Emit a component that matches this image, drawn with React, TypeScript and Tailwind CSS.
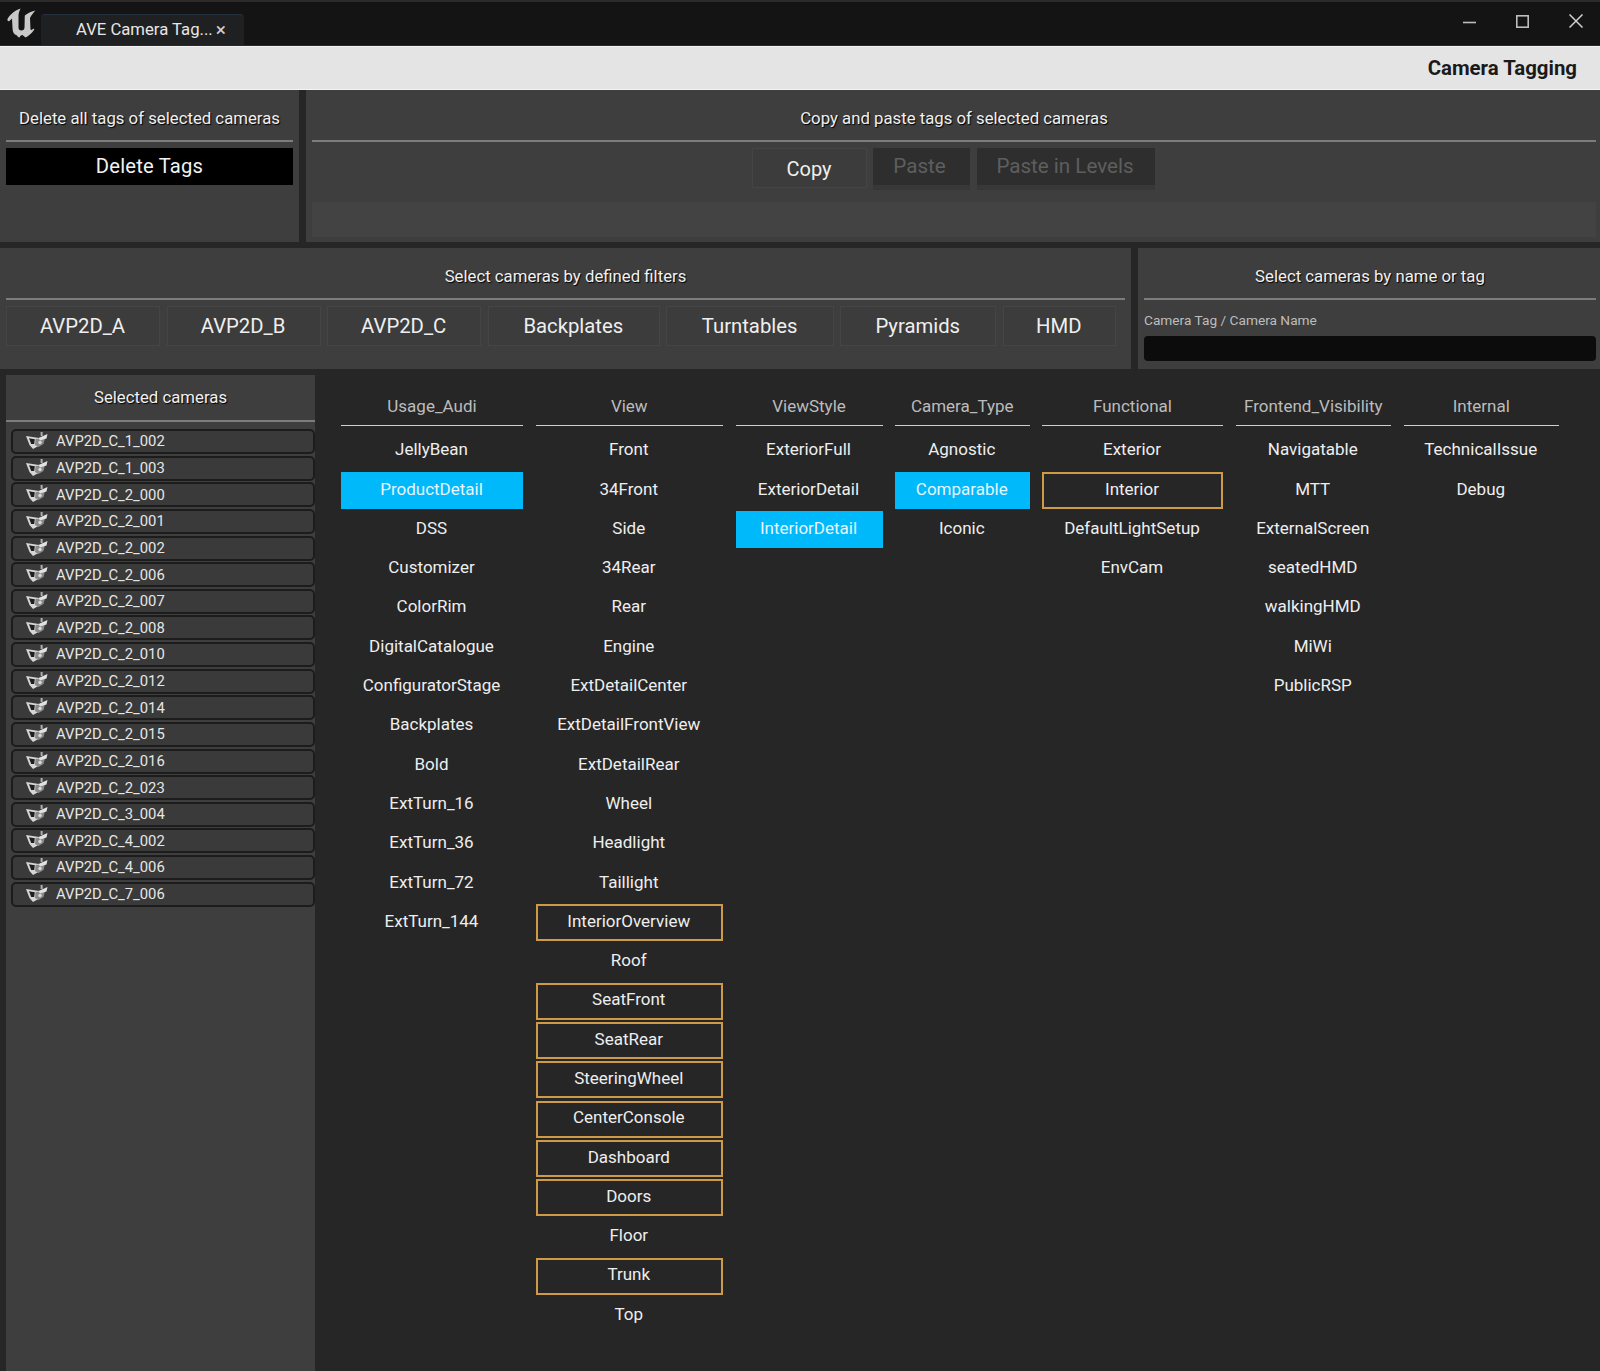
import React from "react";

const font = { fontFamily: "Roboto, 'Liberation Sans', sans-serif" };

type Tag = string | { t: string; s: "blue" | "orange" };

const o = (t: string): Tag => ({ t, s: "orange" });
const b = (t: string): Tag => ({ t, s: "blue" });

const columns: { title: string; w: string; items: Tag[] }[] = [
  {
    title: "Usage_Audi",
    w: "w-[182px]",
    items: ["JellyBean", b("ProductDetail"), "DSS", "Customizer", "ColorRim", "DigitalCatalogue", "ConfiguratorStage", "Backplates", "Bold", "ExtTurn_16", "ExtTurn_36", "ExtTurn_72", "ExtTurn_144"],
  },
  {
    title: "View",
    w: "w-[187.5px]",
    items: ["Front", "34Front", "Side", "34Rear", "Rear", "Engine", "ExtDetailCenter", "ExtDetailFrontView", "ExtDetailRear", "Wheel", "Headlight", "Taillight", o("InteriorOverview"), "Roof", o("SeatFront"), o("SeatRear"), o("SteeringWheel"), o("CenterConsole"), o("Dashboard"), o("Doors"), "Floor", o("Trunk"), "Top"],
  },
  { title: "ViewStyle", w: "w-[147px]", items: ["ExteriorFull", "ExteriorDetail", b("InteriorDetail")] },
  { title: "Camera_Type", w: "w-[134.5px]", items: ["Agnostic", b("Comparable"), "Iconic"] },
  { title: "Functional", w: "w-[181px]", items: ["Exterior", o("Interior"), "DefaultLightSetup", "EnvCam"] },
  { title: "Frontend_Visibility", w: "w-[155.5px]", items: ["Navigatable", "MTT", "ExternalScreen", "seatedHMD", "walkingHMD", "MiWi", "PublicRSP"] },
  { title: "Internal", w: "w-[155.5px]", items: ["TechnicalIssue", "Debug"] },
];

const cameras = ["1_002", "1_003", "2_000", "2_001", "2_002", "2_006", "2_007", "2_008", "2_010", "2_012", "2_014", "2_015", "2_016", "2_023", "3_004", "4_002", "4_006", "7_006"];

const filters: { t: string; w: string }[] = [
  { t: "AVP2D_A", w: "w-[154px]" },
  { t: "AVP2D_B", w: "w-[154px]" },
  { t: "AVP2D_C", w: "w-[154px]" },
  { t: "Backplates", w: "w-[172px]" },
  { t: "Turntables", w: "w-[167.5px]" },
  { t: "Pyramids", w: "w-[155.5px]" },
  { t: "HMD", w: "w-[113.5px]" },
];

function UnrealLogo() {
  return (
    <svg width="32" height="30" viewBox="0 0 32 30" className="ml-[5px] mt-[6px] shrink-0">
      <path
        fill="#c9c9c9"
        d="M15.5 0.5 C11 2 5.5 5.5 2.5 11 C2 13 3.5 14 5 12.5 L7 10.5 L7.5 20 C7.5 24 9 26.5 12 27.5 C12.5 28.5 13.5 29.5 14.5 29.5 C15 28 16 27.2 17.5 27 L20.5 29.5 C23.5 28 26.5 25.5 29 22 C29.5 21 29 20.4 28 21 L26.5 22 L25.5 21.5 L25 10 C26.5 7 28.5 4.5 30.5 2.5 C27 3.2 23 5 19.8 7.5 L19.5 19.5 C19.5 21.5 18.2 22.5 16.5 22.5 C14.5 22.5 13.5 21.3 13.5 19.5 L13.5 8 C13.5 5.5 14.3 3 15.5 0.5 Z"
      />
    </svg>
  );
}

function CameraIcon() {
  return (
    <svg width="22" height="17" viewBox="0 0 22 17" className="shrink-0 mb-[2px]">
      <path fill="#d6d6d6" d="M0 4 L13 6 L12.5 14 L7 17 L3.5 13 Z" />
      <path fill="#1e1e1e" d="M3 6.2 L8.8 7.2 L8.2 12 L5.2 12 Z" />
      <path fill="#8a8a8a" d="M9.5 7 L19 6 L17.5 12 L12.5 15 L9 13 Z" />
      <path fill="#e2e2e2" d="M12.5 6 L21.5 2 L20.5 6.5 L14 8.5 Z" />
      <rect x="14.6" y="0" width="2" height="4" fill="#b0b0b0" />
      <circle cx="14" cy="10.5" r="1.7" fill="#dadada" />
    </svg>
  );
}

function SectionHeader({ children, h = "h-[52px]", pt = "pt-[7px]" }: { children: React.ReactNode; h?: string; pt?: string }) {
  return (
    <div className={`${h} ${pt} flex items-center justify-center border-b-2 border-[#7c7c7c] text-[16.75px] text-[#f0f0f0] [text-shadow:1px_1px_1px_#000]`}>
      {children}
    </div>
  );
}

function Item({ tag }: { tag: Tag }) {
  const text = typeof tag === "string" ? tag : tag.t;
  const state = typeof tag === "string" ? null : tag.s;
  const cls =
    state === "blue"
      ? "bg-[#00b9fb] text-[#e8f4fa]"
      : state === "orange"
        ? "border-2 border-[#cf9a45] text-[#eeeeee]"
        : "text-[#eeeeee]";
  return (
    <div className={`h-[37px] shrink-0 flex items-center justify-center pb-[2px] pr-[1px] text-[17px] whitespace-nowrap ${cls}`}>
      {text}
    </div>
  );
}

export default function App() {
  return (
    <div style={font} className="w-[1600px] h-[1371px] overflow-hidden flex flex-col bg-[#262626]">
      {/* Title bar */}
      <div className="h-[46px] shrink-0 flex bg-[#141414] border-t-2 border-t-[#2b2b2b] border-b border-b-[#2a2a2a]">
        <UnrealLogo />
        <div className="ml-[4px] mt-[12px] w-[203px] h-[31px] rounded-t-[4px] bg-[#1f2022] border-t border-[#24303e] flex items-center pl-[35px] text-[16.7px] text-[#e6e6e6] shrink-0">
          <span className="whitespace-nowrap">AVE Camera Tag...</span>
          <span className="ml-[3px] pb-[2px] text-[19px] text-[#d0d0d0] leading-none">×</span>
        </div>
        <div className="ml-auto flex items-center gap-[40px] pr-[17px] pb-[5px]">
          <svg width="13" height="13" viewBox="0 0 13 13" stroke="#bdbdbd" strokeWidth="1.6" fill="none"><path d="M0 7.5H13" /></svg>
          <svg width="13" height="13" viewBox="0 0 13 13" stroke="#bdbdbd" strokeWidth="1.6" fill="none"><rect x="0.8" y="0.8" width="11.4" height="11.4" /></svg>
          <svg width="14" height="14" viewBox="0 0 14 14" stroke="#d0d0d0" strokeWidth="1.5" fill="none"><path d="M0.5 0.5L13.5 13.5M13.5 0.5L0.5 13.5" /></svg>
        </div>
      </div>

      {/* Title strip */}
      <div className="h-[44px] shrink-0 flex items-center justify-end bg-[#e4e4e4] border-y border-[#f4f4f4] pr-[23px] text-[20.4px] font-bold text-[#1a1a1a]">
        Camera Tagging
      </div>

      {/* Row 1 */}
      <div className="h-[152px] shrink-0 flex gap-[7px]">
        <div className="w-[299px] bg-[#3e3e3e] px-[6px]">
          <SectionHeader>Delete all tags of selected cameras</SectionHeader>
          <div className="mt-[6px] h-[37px] bg-black flex items-center justify-center text-[20.2px] text-[#f2f2f2] tracking-[0.2px]">
            Delete Tags
          </div>
        </div>
        <div className="flex-1 bg-[#3e3e3e] pl-[6px] pr-[4px] flex flex-col">
          <SectionHeader>Copy and paste tags of selected cameras</SectionHeader>
          <div className="mt-[6px] h-[41px] flex justify-center gap-[6.5px] pr-[2px]">
            <div className="w-[115px] h-[40px] border border-[#454545] bg-[#3c3c3c] flex items-center justify-center text-[20px] text-[#efefef] pt-[2px]">Copy</div>
            <div className="w-[97px] h-[37px] bg-[#2e2e2e] shadow-[0_5px_0_#383838] flex items-center justify-center pb-[1px] pr-[4px] text-[20.6px] text-[#5e5e5e]">Paste</div>
            <div className="w-[178px] h-[37px] bg-[#2e2e2e] shadow-[0_5px_0_#383838] flex items-center justify-center pb-[1px] pr-[1px] text-[20.6px] text-[#5e5e5e]">Paste in Levels</div>
          </div>
          <div className="mt-[13px] h-[35px] bg-[#434343]" />
        </div>
      </div>

      {/* Row 2 */}
      <div className="mt-[6px] h-[121px] shrink-0 flex gap-[7px]">
        <div className="w-[1131px] bg-[#3e3e3e] px-[6px]">
          <SectionHeader>Select cameras by defined filters</SectionHeader>
          <div className="mt-[6px] flex gap-[6.6px] h-[40px]">
            {filters.map((f) => (
              <div key={f.t} className={`${f.w} shrink-0 border border-[#454545] bg-[#3c3c3c] flex items-center justify-center pr-[1px] text-[20.3px] text-[#efefef]`}>
                {f.t}
              </div>
            ))}
          </div>
        </div>
        <div className="flex-1 bg-[#3e3e3e] pl-[6px] pr-[4px]">
          <SectionHeader>Select cameras by name or tag</SectionHeader>
          <div className="mt-[11px] text-[13.7px] leading-[18px] text-[#bdbdbd]">Camera Tag / Camera Name</div>
          <div className="mt-[7px] h-[25px] rounded-[4px] bg-[#0c0c0c]" />
        </div>
      </div>

      {/* Main */}
      <div className="mt-[6px] flex-1 min-h-0 flex pl-[6px]">
        <div className="w-[309px] shrink-0 bg-[#3e3e3e]">
          <SectionHeader h="h-[47px]" pt="pt-0">Selected cameras</SectionHeader>
          <div className="mt-[7px] ml-[5px] flex flex-col gap-[1.63px]">
            {cameras.map((c) => (
              <div key={c} className="h-[25px] w-[304px] flex items-center rounded-[5px] border-2 border-[#1c1c1c] bg-[#3a3a3a] pl-[13px] gap-[8px] text-[14.8px] text-[#e6e6e6]">
                <CameraIcon />
                <span>AVP2D_C_{c}</span>
              </div>
            ))}
          </div>
        </div>
        <div className="pl-[26px] flex gap-[12.5px]">
          {columns.map((col) => (
            <div key={col.title} className={`${col.w} shrink-0`}>
              <div className="h-[51px] flex items-center justify-center border-b border-[#cfcfcf] pt-[13px] text-[17px] text-[#bcbcbc] whitespace-nowrap">
                {col.title}
              </div>
              <div className="mt-[6.5px] flex flex-col gap-[2.3px]">
                {col.items.map((t, i) => (
                  <Item key={i} tag={t} />
                ))}
              </div>
            </div>
          ))}
        </div>
      </div>
    </div>
  );
}
